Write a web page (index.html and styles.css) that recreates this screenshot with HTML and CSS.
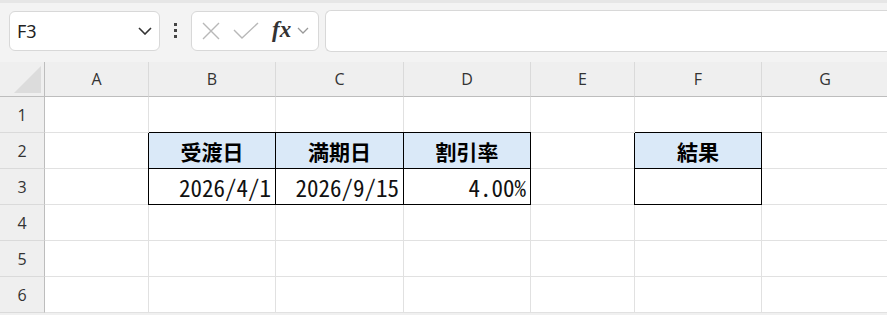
FILE: index.html
```html
<!DOCTYPE html>
<html lang="ja">
  <head>
    <meta charset="UTF-8" />
    <title>Book1</title>
    <link rel="stylesheet" href="styles.css">
  </head>
  <body>
    <div class="toolbar">
      <div class="namebox">
        <span class="cellref">F3</span>
        <svg class="chev" width="14" height="8" viewBox="0 0 14 8"><path d="M1 1l6 6 6-6" fill="none" stroke="#333" stroke-width="1.6"/></svg>
      </div>
      <div class="dots"><i></i><i></i><i></i></div>
      <div class="fxgroup">
        <svg width="20" height="20" viewBox="0 0 20 20"><path d="M2 2l16 16M18 2L2 18" stroke="#b8b8b8" stroke-width="1.4"/></svg>
        <svg width="26" height="20" viewBox="0 0 26 20"><path d="M1 9l8 8L25 2" fill="none" stroke="#b8b8b8" stroke-width="1.4"/></svg>
        <span class="fx">fx</span>
        <svg class="chev2" width="12" height="8" viewBox="0 0 12 8"><path d="M1 1l5 5 5-5" fill="none" stroke="#999" stroke-width="1.3"/></svg>
      </div>
      <div class="formula"></div>
    </div>

    <div class="sheet">
      <div class="corner"><span class="tri"></span></div>
      <div class="colhead">A</div>
      <div class="colhead">B</div>
      <div class="colhead">C</div>
      <div class="colhead">D</div>
      <div class="colhead">E</div>
      <div class="colhead">F</div>
      <div class="colhead">G</div>

      <div class="rowhead">1</div>
      <div class="cell"></div><div class="cell"></div><div class="cell"></div><div class="cell"></div><div class="cell"></div><div class="cell"></div><div class="cell"></div>

      <div class="rowhead">2</div>
      <div class="cell"></div>
      <div class="cell boxed head">受渡日</div>
      <div class="cell boxed head">満期日</div>
      <div class="cell boxed head">割引率</div>
      <div class="cell"></div>
      <div class="cell boxed head">結果</div>
      <div class="cell"></div>

      <div class="rowhead">3</div>
      <div class="cell"></div>
      <div class="cell boxed num">2026/4/1</div>
      <div class="cell boxed num">2026/9/15</div>
      <div class="cell boxed num">4.00%</div>
      <div class="cell"></div>
      <div class="cell boxed num"></div>
      <div class="cell"></div>

      <div class="rowhead">4</div>
      <div class="cell"></div><div class="cell"></div><div class="cell"></div><div class="cell"></div><div class="cell"></div><div class="cell"></div><div class="cell"></div>

      <div class="rowhead">5</div>
      <div class="cell"></div><div class="cell"></div><div class="cell"></div><div class="cell"></div><div class="cell"></div><div class="cell"></div><div class="cell"></div>

      <div class="rowhead">6</div>
      <div class="cell"></div><div class="cell"></div><div class="cell"></div><div class="cell"></div><div class="cell"></div><div class="cell"></div><div class="cell"></div>
    </div>
  </body>
</html>
```

FILE: styles.css
```css
body {
  margin: 0;
  background: #f0f0f0;
  font-family: "Open Sans", "Noto Sans", sans-serif;
  overflow: hidden;
}

.toolbar {
  height: 62px;
  display: flex;
  align-items: center;
  padding-left: 9px;
  padding-bottom: 4px;
  border-top: 3px solid #e6e6e6;
  box-sizing: border-box;
  background: #f3f3f3;
}

.namebox {
  width: 151px;
  height: 40px;
  box-sizing: border-box;
  background: #fff;
  border: 1px solid #d8d8d8;
  border-radius: 6px;
  display: flex;
  align-items: center;
  justify-content: space-between;
  padding: 0 7px 0 7px;
}

.cellref {
  font-family: "Noto Sans", sans-serif;
  font-size: 18px;
  color: #222;
}

.dots {
  width: 31px;
  display: flex;
  flex-direction: column;
  align-items: center;
  gap: 3px;
}

.dots i {
  display: block;
  width: 3px;
  height: 3px;
  background: #444;
}

.fxgroup {
  width: 128px;
  height: 40px;
  box-sizing: border-box;
  background: #fff;
  border: 1px solid #d8d8d8;
  border-radius: 6px;
  display: flex;
  align-items: center;
  padding-left: 9px;
  gap: 12px;
}

.fx {
  font-family: "Liberation Serif", serif;
  font-style: italic;
  font-weight: bold;
  font-size: 23px;
  color: #333;
  margin-left: 1px;
  line-height: 1;
  padding-bottom: 3px;
}

.chev2 {
  margin-left: -6px;
}

.formula {
  flex: 1;
  height: 40px;
  margin-left: 6px;
  background: #fff;
  border: 1px solid #d8d8d8;
  border-right: none;
  border-radius: 6px 0 0 6px;
}

.sheet {
  display: grid;
  grid-template-columns: 45px 104px 127px 128px 127px 104px 127px 127px;
  grid-template-rows: 35px repeat(6, 36px);
  background: #fff;
}

.corner {
  background: #efefef;
  border-right: 1px solid #bdbdbd;
  border-bottom: 1px solid #bdbdbd;
  position: relative;
}

.tri {
  position: absolute;
  right: 3px;
  bottom: 3px;
  width: 27px;
  height: 27px;
  background: #dcdcdc;
  clip-path: polygon(100% 0, 100% 100%, 0 100%);
}

.colhead {
  background: #efefef;
  border-right: 1px solid #dadada;
  border-bottom: 1px solid #bdbdbd;
  display: flex;
  align-items: center;
  justify-content: center;
  font-size: 16px;
  color: #333;
}

.rowhead {
  background: #efefef;
  border-right: 1px solid #bdbdbd;
  border-bottom: 1px solid #dadada;
  display: flex;
  align-items: center;
  justify-content: center;
  font-size: 16px;
  color: #333;
}

.cell {
  border-right: 1px solid #e1e1e1;
  border-bottom: 1px solid #e1e1e1;
  display: flex;
  align-items: center;
  font-family: "Noto Sans CJK JP", sans-serif;
  font-size: 21px;
  color: #000;
  padding: 0 3px;
}

.cell.boxed {
  border-color: #000;
  box-shadow: -1px 0 0 #000, 0 -1px 0 #000;
}

.head {
  background: #dae9f8;
  font-weight: bold;
  justify-content: center;
}

.num {
  justify-content: flex-end;
  font-family: "Noto Sans Mono CJK JP", "Noto Sans CJK JP", monospace;
  font-feature-settings: "hwid";
  font-weight: 300;
  font-size: 23px;
  color: #111;
  padding-right: 4px;
}
```
